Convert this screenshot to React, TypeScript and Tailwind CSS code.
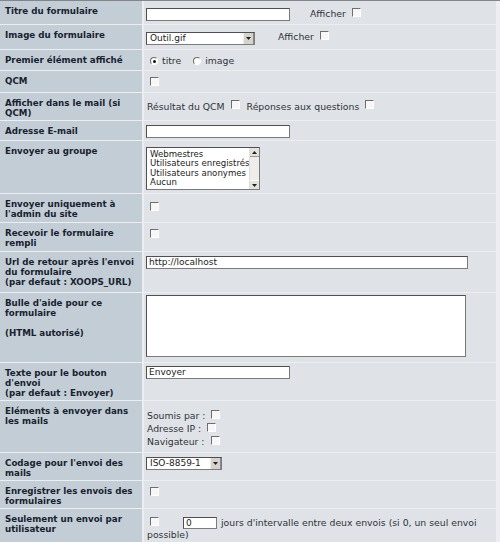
import type { ReactNode } from 'react';

const labelCls =
  'w-[142px] shrink-0 bg-[#c3cdd6] pl-[5px] pr-[4px] pt-[5px] font-bold text-[8.7px] leading-[10px] text-[#18222e]';
const valueCls = 'w-[352px] shrink-0 bg-[#dfe3e7] text-[9.3px] leading-[10px] text-[#2e3338]';

function Row({ label, h, children }: { label: ReactNode; h: string; children?: ReactNode }) {
  return (
    <div className={`flex gap-[2px] ${h}`}>
      <div className={labelCls}>{label}</div>
      <div className={valueCls}>{children}</div>
    </div>
  );
}

function Check({ className = '' }: { className?: string }) {
  return (
    <span
      className={`block w-[9px] h-[9px] shrink-0 border border-t-[#6e6e6e] border-l-[#6e6e6e] border-r-white border-b-white bg-[#f7f7f7] ${className}`}
    />
  );
}

function Radio({ on = false }: { on?: boolean }) {
  return (
    <span className="flex items-center justify-center w-[8px] h-[8px] shrink-0 rounded-full border border-t-[#6e6e6e] border-l-[#6e6e6e] border-r-white border-b-white bg-white">
      {on && <span className="block w-[3px] h-[3px] rounded-full bg-[#111]" />}
    </span>
  );
}

function TextBox({ w, h = 'h-[13px]', value = '' }: { w: string; h?: string; value?: string }) {
  return (
    <div
      className={`${w} ${h} shrink-0 overflow-hidden border border-[#7b7b7b] border-t-[#4f4f4f] border-l-[#4f4f4f] bg-white pl-[2px] text-[9px] leading-[10px] text-[#222]`}
    >
      {value}
    </div>
  );
}

function Arrow({ up = false }: { up?: boolean }) {
  return (
    <svg width="5" height="3" viewBox="0 0 5 3">
      <path d={up ? 'M0 3 L2.5 0 L5 3 Z' : 'M0 0 L5 0 L2.5 3 Z'} fill="#222" />
    </svg>
  );
}

function Select({ w, value, mt }: { w: string; value: string; mt: string }) {
  return (
    <div className={`${w} ${mt} h-[13px] shrink-0 flex border border-[#7b7b7b] border-t-[#4f4f4f] border-l-[#4f4f4f] bg-white`}>
      <div className="flex-1 pl-[3px] text-[9px] leading-[11px] text-[#222]">{value}</div>
      <div className="w-[11px] h-full flex items-center justify-center bg-[#d6d3cc] border-l border-[#eee] border-r border-r-[#888]">
        <Arrow />
      </div>
    </div>
  );
}

export default function App() {
  return (
    <div className="w-[500px] h-[542px] overflow-hidden bg-[#eceef1] border-t border-[#80868c] font-['DejaVu_Sans',sans-serif]">
      <div className="flex flex-col gap-y-px w-[496px]">
        <Row label="Titre du formulaire" h="h-[23px]">
          <div className="flex items-start pl-[2px] pt-[7px]">
            <TextBox w="w-[144px]" />
            <span className="ml-[20px] mt-px">Afficher</span>
            <Check className="ml-[6px]" />
          </div>
        </Row>
        <Row label="Image du formulaire" h="h-[24px]">
          <div className="flex items-start pl-[2px]">
            <Select w="w-[109px]" value="Outil.gif" mt="mt-[7px]" />
            <span className="ml-[23px] mt-[7px]">Afficher</span>
            <Check className="ml-[6px] mt-[6px]" />
          </div>
        </Row>
        <Row label="Premier élément affiché" h="h-[20px]">
          <div className="flex items-center pl-[6px] pt-[6px] gap-[4px]">
            <Radio on />
            <span>titre</span>
            <span className="ml-[4px]" />
            <Radio />
            <span>image</span>
          </div>
        </Row>
        <Row label="QCM" h="h-[21px]">
          <div className="pl-[6px] pt-[6px]">
            <Check />
          </div>
        </Row>
        <Row label="Afficher dans le mail (si QCM)" h="h-[27px]">
          <div className="flex items-start pl-[3px] pt-[7px]">
            <span className="mt-[2px]">Résultat du QCM</span>
            <Check className="ml-[6px]" />
            <span className="ml-[7px] mt-[2px]">Réponses aux questions</span>
            <Check className="ml-[6px]" />
          </div>
        </Row>
        <Row label="Adresse E-mail" h="h-[19px]">
          <div className="pl-[2px] pt-[4px]">
            <TextBox w="w-[144px]" />
          </div>
        </Row>
        <Row label="Envoyer au groupe" h="h-[52px]">
          <div className="pl-[2px] pt-[6px]">
            <div className="w-[114px] h-[43px] flex border border-[#7b7b7b] border-t-[#4f4f4f] border-l-[#4f4f4f] bg-white">
              <div className="flex-1 overflow-hidden pl-[3px] pt-[2px] text-[8.6px] leading-[9.3px] text-[#222]">
                <div>Webmestres</div>
                <div className="whitespace-nowrap">Utilisateurs enregistrés</div>
                <div className="whitespace-nowrap">Utilisateurs anonymes</div>
                <div>Aucun</div>
              </div>
              <div className="w-[10px] shrink-0 flex flex-col justify-between bg-[#eeedea] border-l border-[#ddd]">
                <div className="h-[9px] flex items-center justify-center bg-[#e4e2dc] border-b border-[#999]">
                  <Arrow up />
                </div>
                <div className="h-[9px] flex items-center justify-center bg-[#e4e2dc] border-t border-[#fff]">
                  <Arrow />
                </div>
              </div>
            </div>
          </div>
        </Row>
        <Row label="Envoyer uniquement à l'admin du site" h="h-[28px]">
          <div className="pl-[6px] pt-[8px]">
            <Check />
          </div>
        </Row>
        <Row label="Recevoir le formulaire rempli" h="h-[28px]">
          <div className="pl-[6px] pt-[6px]">
            <Check />
          </div>
        </Row>
        <Row
          label={
            <>
              Url de retour après l'envoi du formulaire
              <br />
              (par defaut : XOOPS_URL)
            </>
          }
          h="h-[40px]"
        >
          <div className="pl-[2px] pt-[4px]">
            <TextBox w="w-[322px]" value="http://localhost" />
          </div>
        </Row>
        <Row
          label={
            <>
              Bulle d'aide pour ce formulaire
              <br />
              <br />
              (HTML autorisé)
            </>
          }
          h="h-[69px]"
        >
          <div className="pl-[2px] pt-[2px]">
            <div className="w-[320px] h-[62px] border border-[#7b7b7b] border-t-[#4f4f4f] border-l-[#4f4f4f] bg-white" />
          </div>
        </Row>
        <Row
          label={
            <>
              Texte pour le bouton d'envoi
              <br />
              (par defaut : Envoyer)
            </>
          }
          h="h-[37px]"
        >
          <div className="pl-[2px] pt-[3px]">
            <TextBox w="w-[144px]" value="Envoyer" />
          </div>
        </Row>
        <Row label="Eléments à envoyer dans les mails" h="h-[51px]">
          <div className="pl-[3px] pt-[8px] leading-[13px]">
            <div className="flex items-start h-[13px]">
              <span>Soumis par :</span>
              <Check className="ml-[6px] mt-px" />
            </div>
            <div className="flex items-start h-[13px]">
              <span>Adresse IP :</span>
              <Check className="ml-[6px] mt-px" />
            </div>
            <div className="flex items-start h-[13px]">
              <span>Navigateur :</span>
              <Check className="ml-[6px] mt-px" />
            </div>
          </div>
        </Row>
        <Row label="Codage pour l'envoi des mails" h="h-[27px]">
          <div className="pl-[2px]">
            <Select w="w-[76px]" value="ISO-8859-1" mt="mt-[4px]" />
          </div>
        </Row>
        <Row label="Enregistrer les envois des formulaires" h="h-[27px]">
          <div className="pl-[6px] pt-[6px]">
            <Check />
          </div>
        </Row>
        <Row label="Seulement un envoi par utilisateur" h="h-[34px]">
          <div className="pl-[3px] pt-[8px] leading-[12px]">
            <div className="flex items-start h-[12px]">
              <Check className="ml-[3px]" />
              <div className="ml-[24px]">
                <TextBox w="w-[34px]" h="h-[12px]" value="0" />
              </div>
              <span className="ml-[4px] whitespace-nowrap">
                jours d'intervalle entre deux envois (si 0, un seul envoi
              </span>
            </div>
            <div>possible)</div>
          </div>
        </Row>
      </div>
    </div>
  );
}
